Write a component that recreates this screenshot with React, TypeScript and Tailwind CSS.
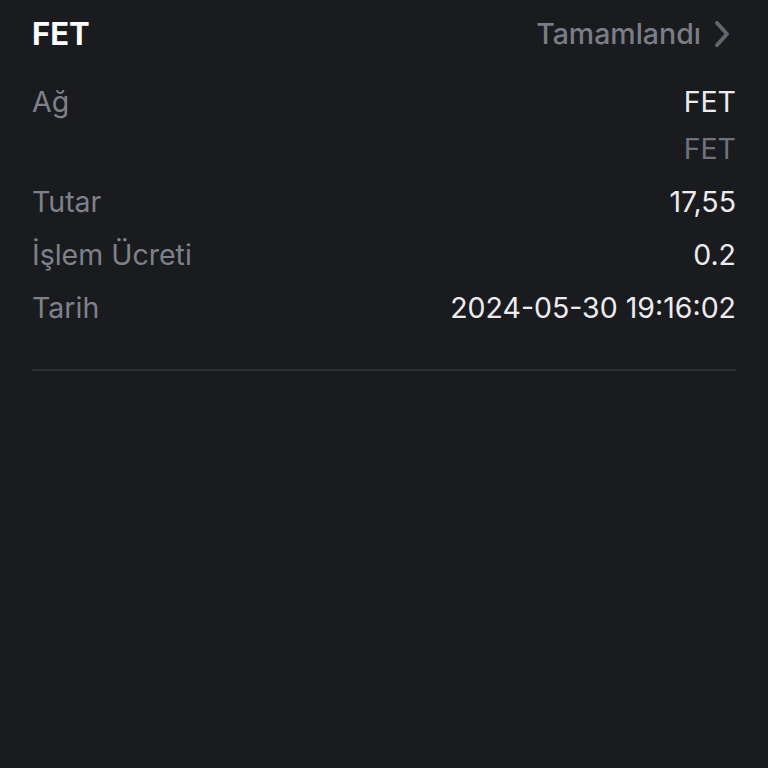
import React from 'react'

const rows = [
  { label: 'Tutar', value: '17,55' },
  { label: 'İşlem Ücreti', value: '0.2' },
  { label: 'Tarih', value: '2024-05-30 19:16:02' },
]

export default function App() {
  return (
    <div
      className="min-h-[768px] w-full bg-[#1a1b1f] px-8 pt-4"
      style={{ fontFamily: 'Inter, "Noto Sans", sans-serif' }}
    >
      <div className="flex h-9 items-center justify-between">
        <span className="text-[31px] font-bold text-white">FET</span>
        <div className="flex items-center gap-[12px] text-[28.5px] font-medium text-[#7a7d86]">
          <span>Tamamlandı</span>
          <svg width="18" height="28" viewBox="0 0 18 28" fill="none" className="mr-[5px]">
            <path d="M4 3l10 11-10 11" stroke="#62656c" strokeWidth="4" strokeLinecap="round" strokeLinejoin="round" />
          </svg>
        </div>
      </div>

      <div className="mt-8 flex flex-col gap-[17px] text-[28.5px] leading-9">
        <div className="flex justify-between">
          <span className="text-[#7e818a]">Ağ</span>
          <div className="flex flex-col items-end gap-[11px]">
            <span className="text-[#ececee]">FET</span>
            <span className="text-[#6f727a]">FET</span>
          </div>
        </div>
        {rows.map((r) => (
          <div key={r.label} className="flex justify-between">
            <span className="text-[#7e818a]">{r.label}</span>
            <span className="text-[#ececee]">{r.value}</span>
          </div>
        ))}
      </div>

      <div className="mt-[43px] h-[2px] bg-[#2e3035]" />
    </div>
  )
}
